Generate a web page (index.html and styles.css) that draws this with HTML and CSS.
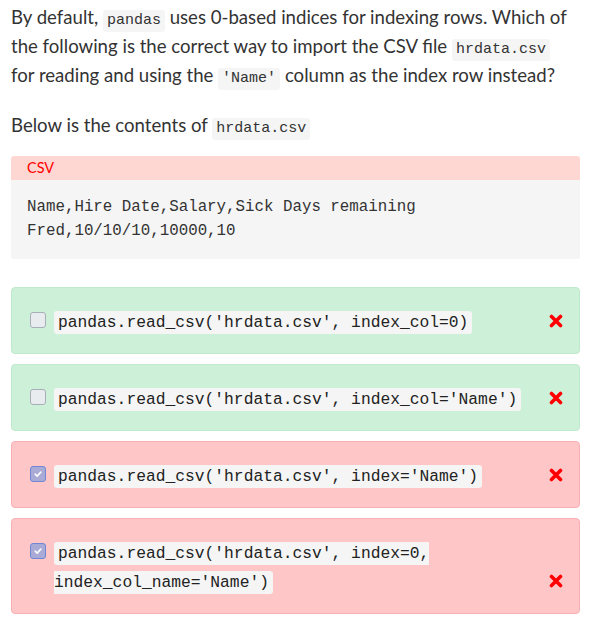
FILE: index.html
```html
<!DOCTYPE html>
<html>
<head>
<meta charset="utf-8">
<link rel="stylesheet" href="styles.css">
</head>
<body>
<div class="page">
  <p class="para">By default, <code class="ic">pandas</code> uses 0-based indices for indexing rows. Which of the following is the correct way to import the CSV file <code class="ic">hrdata.csv</code> for reading and using the <code class="ic">'Name'</code> column as the index row instead?</p>
  <p class="para para2">Below is the contents of <code class="ic">hrdata.csv</code></p>

  <div class="csv">
    <div class="csv-head">CSV</div>
    <pre class="csv-body">Name,Hire Date,Salary,Sick Days remaining
Fred,10/10/10,10000,10</pre>
  </div>

  <div class="options">
    <div class="opt correct">
      <span class="cb"></span>
      <div class="opt-text"><code class="oc">pandas.read_csv('hrdata.csv', index_col=0)</code></div>
      <span class="mark"><svg width="14" height="14" viewBox="0 0 14 14"><path d="M2.5 2.5 L11.5 11.5 M11.5 2.5 L2.5 11.5" stroke="#ff0000" stroke-width="3.6" stroke-linecap="round"/></svg></span>
    </div>
    <div class="opt correct">
      <span class="cb"></span>
      <div class="opt-text"><code class="oc">pandas.read_csv('hrdata.csv', index_col='Name')</code></div>
      <span class="mark"><svg width="14" height="14" viewBox="0 0 14 14"><path d="M2.5 2.5 L11.5 11.5 M11.5 2.5 L2.5 11.5" stroke="#ff0000" stroke-width="3.6" stroke-linecap="round"/></svg></span>
    </div>
    <div class="opt wrong">
      <span class="cb checked"><svg width="10" height="10" viewBox="0 0 10 10"><path d="M2.2 5.2 L4.2 7.1 L7.9 3" stroke="#fff" stroke-width="1.6" fill="none" stroke-linecap="round" stroke-linejoin="round"/></svg></span>
      <div class="opt-text"><code class="oc">pandas.read_csv('hrdata.csv', index='Name')</code></div>
      <span class="mark"><svg width="14" height="14" viewBox="0 0 14 14"><path d="M2.5 2.5 L11.5 11.5 M11.5 2.5 L2.5 11.5" stroke="#ff0000" stroke-width="3.6" stroke-linecap="round"/></svg></span>
    </div>
    <div class="opt wrong">
      <span class="cb checked"><svg width="10" height="10" viewBox="0 0 10 10"><path d="M2.2 5.2 L4.2 7.1 L7.9 3" stroke="#fff" stroke-width="1.6" fill="none" stroke-linecap="round" stroke-linejoin="round"/></svg></span>
      <div class="opt-text"><code class="oc">pandas.read_csv('hrdata.csv', index=0, index_col_name='Name')</code></div>
      <span class="mark"><svg width="14" height="14" viewBox="0 0 14 14"><path d="M2.5 2.5 L11.5 11.5 M11.5 2.5 L2.5 11.5" stroke="#ff0000" stroke-width="3.6" stroke-linecap="round"/></svg></span>
    </div>
  </div>
</div>
</body>
</html>
```
FILE: styles.css
```css
html, body {
  margin: 0;
  padding: 0;
  background: #ffffff;
}
.page {
  padding: 3px 17px 0 11px;
  font-family: Lato, "Noto Sans", sans-serif;
  font-size: 18.6px;
  color: #333333;
}
.para {
  margin: 0;
  line-height: 29px;
  max-width: 560px;
}
.para2 {
  margin-top: 21px;
}
.ic {
  font-family: "Liberation Mono", monospace;
  font-size: 15px;
  line-height: 1;
  background: #f5f5f5;
  border-radius: 3px;
  padding: 2px 4px 3px 4px;
}
.csv {
  margin-top: 16px;
  border-radius: 3px;
  overflow: hidden;
}
.csv-head {
  background: #ffd7d2;
  color: #ff0000;
  font-size: 14.5px;
  height: 24px;
  line-height: 24px;
  padding-left: 16px;
}
.csv-body {
  margin: 0;
  background: #f5f5f5;
  font-family: "Liberation Mono", monospace;
  font-size: 15.8px;
  line-height: 24px;
  padding: 15px 16px 16px 16px;
  color: #333333;
}
.options {
  margin-top: 28px;
  display: flex;
  flex-direction: column;
  gap: 10px;
}
.opt {
  display: flex;
  align-items: flex-start;
  border-radius: 4px;
  border: 1px solid;
  padding: 18px 16px 18px 18px;
  line-height: 29px;
  font-size: 16px;
}
.correct {
  background: #cdf0d9;
  border-color: #bfe9cd;
}
.wrong {
  background: #ffc6c8;
  border-color: #f9b0b4;
}
.cb {
  flex: none;
  width: 14px;
  height: 14px;
  margin-top: 6px;
  border: 1px solid #a7aeb6;
  background: #e9ecef;
  border-radius: 3px;
  display: flex;
  align-items: center;
  justify-content: center;
}
.cb.checked {
  background: #a9abd6;
  border-color: #6f87d5;
}
.opt-text {
  flex: 1;
  margin-left: 8px;
  padding-right: 20px;
}
.oc {
  font-family: "Liberation Mono", monospace;
  font-size: 16.3px;
  line-height: 1;
  background: #f5f5f5;
  border-radius: 3px;
  padding: 2px 4px 2px 4px;
  color: #222222;
}
.mark {
  flex: none;
  align-self: flex-end;
  height: 29px;
  display: flex;
  align-items: center;
}
.mark svg {
  display: block;
}
```
